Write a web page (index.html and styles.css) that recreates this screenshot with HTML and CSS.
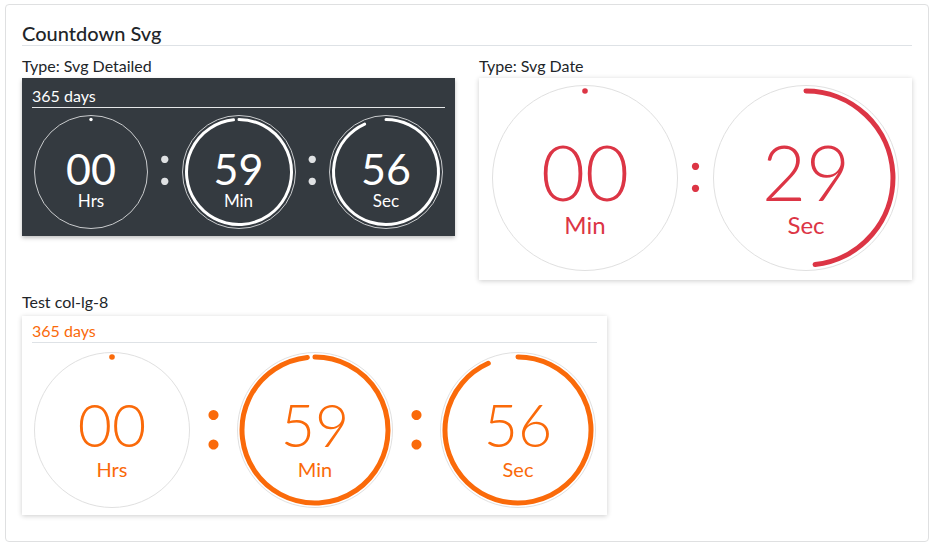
FILE: index.html
```html
<!DOCTYPE html>
<html lang="en">
<head>
<meta charset="utf-8">
<title>Countdown Svg</title>
<link rel="stylesheet" href="styles.css">
</head>
<body>
<div class="card">
  <h5 class="title">Countdown Svg</h5>
  <div class="row">
    <div class="col">
      <div class="label">Type: Svg Detailed</div>
      <div class="panel panel-dark">
        <div class="days">365 days</div>
        <div class="timer">
          <div class="ring ring-sm">
            <svg class="ring-svg" viewBox="0 0 114 114" width="114" height="114">
              <circle cx="57" cy="57" r="56.5" fill="none" stroke="#c9cbcd" stroke-width="1"/>
              <circle cx="57" cy="4.5" r="1.7" fill="#fff"/>
            </svg>
            <div class="txt"><span class="num">00</span><span class="lbl">Hrs</span></div>
          </div>
          <div class="colon">:</div>
          <div class="ring ring-sm">
            <svg class="ring-svg" viewBox="0 0 114 114" width="114" height="114">
              <circle cx="57" cy="57" r="56.5" fill="none" stroke="#c9cbcd" stroke-width="1"/>
              <path d="M57 4.5 A52.5 52.5 0 1 1 51.51 4.79" fill="none" stroke="#fff" stroke-width="3" stroke-linecap="round"/>
            </svg>
            <div class="txt"><span class="num">59</span><span class="lbl">Min</span></div>
          </div>
          <div class="colon">:</div>
          <div class="ring ring-sm">
            <svg class="ring-svg" viewBox="0 0 114 114" width="114" height="114">
              <circle cx="57" cy="57" r="56.5" fill="none" stroke="#c9cbcd" stroke-width="1"/>
              <path d="M57 4.5 A52.5 52.5 0 1 1 35.65 9.04" fill="none" stroke="#fff" stroke-width="3" stroke-linecap="round"/>
            </svg>
            <div class="txt"><span class="num">56</span><span class="lbl">Sec</span></div>
          </div>
        </div>
      </div>
    </div>
    <div class="col">
      <div class="label">Type: Svg Date</div>
      <div class="panel panel-date">
        <div class="timer">
          <div class="ring ring-lg">
            <svg class="ring-svg" viewBox="0 0 186 186" width="186" height="186">
              <circle cx="93" cy="93" r="92.5" fill="none" stroke="#e0e0e0" stroke-width="1"/>
              <circle cx="93" cy="6" r="2.8" fill="#dc3545"/>
            </svg>
            <div class="txt"><span class="num">00</span><span class="lbl">Min</span></div>
          </div>
          <div class="colon">:</div>
          <div class="ring ring-lg">
            <svg class="ring-svg" viewBox="0 0 186 186" width="186" height="186">
              <circle cx="93" cy="93" r="92.5" fill="none" stroke="#e0e0e0" stroke-width="1"/>
              <path d="M93 6 A87 87 0 0 1 102.09 179.52" fill="none" stroke="#dc3545" stroke-width="5" stroke-linecap="round"/>
            </svg>
            <div class="txt"><span class="num">29</span><span class="lbl">Sec</span></div>
          </div>
        </div>
      </div>
    </div>
  </div>
  <div class="label label-test">Test col-lg-8</div>
  <div class="panel panel-orange">
    <div class="days">365 days</div>
    <div class="timer">
      <div class="ring ring-md">
        <svg class="ring-svg" viewBox="0 0 156 156" width="156" height="156">
          <circle cx="78" cy="78" r="77.5" fill="none" stroke="#e0e0e0" stroke-width="1"/>
          <circle cx="78" cy="5" r="2.8" fill="#fa6a0a"/>
        </svg>
        <div class="txt"><span class="num">00</span><span class="lbl">Hrs</span></div>
      </div>
      <div class="colon">:</div>
      <div class="ring ring-md">
        <svg class="ring-svg" viewBox="0 0 156 156" width="156" height="156">
          <circle cx="78" cy="78" r="77.5" fill="none" stroke="#e0e0e0" stroke-width="1"/>
          <path d="M78 5 A73 73 0 1 1 70.37 5.40" fill="none" stroke="#fa6a0a" stroke-width="5" stroke-linecap="round"/>
        </svg>
        <div class="txt"><span class="num">59</span><span class="lbl">Min</span></div>
      </div>
      <div class="colon">:</div>
      <div class="ring ring-md">
        <svg class="ring-svg" viewBox="0 0 156 156" width="156" height="156">
          <circle cx="78" cy="78" r="77.5" fill="none" stroke="#e0e0e0" stroke-width="1"/>
          <path d="M78 5 A73 73 0 1 1 48.31 11.31" fill="none" stroke="#fa6a0a" stroke-width="5" stroke-linecap="round"/>
        </svg>
        <div class="txt"><span class="num">56</span><span class="lbl">Sec</span></div>
      </div>
    </div>
  </div>
</div>
</body>
</html>
```
FILE: styles.css
```css
* { box-sizing: border-box; }
html, body { margin: 0; padding: 0; background: #fff; }
body {
  font-family: Lato, "Open Sans", "Liberation Sans", sans-serif;
  font-size: 16px;
  color: #212529;
}
.card {
  margin: 4px 5px 0 5px;
  width: 924px;
  height: 538px;
  border: 1px solid #dfe0e1;
  border-radius: 4px;
  padding: 16px 16px 0 16px;
}
.title {
  margin: 0;
  font-size: 20px;
  font-weight: 500;
  line-height: 24px;
  border-bottom: 1px solid #dee2e6;
  color: #212529;
}
.row {
  display: flex;
  gap: 24px;
  align-items: flex-start;
}
.col { width: 433px; }
.label {
  line-height: 20px;
  margin: 10px 0 2px 0;
}
.label-test { margin: 12px 0 4px 0; }
.panel { width: 433px; }
.panel-dark {
  background: #343a40;
  color: #fff;
  padding: 7px 10px 7px 10px;
  box-shadow: 0 2px 4px rgba(0,0,0,.25);
}
.panel-date {
  background: #fff;
  color: #dc3545;
  padding: 7px 13px 9px 13px;
  box-shadow: 0 1px 5px rgba(0,0,0,.2);
}
.panel-orange {
  width: 585px;
  background: #fff;
  color: #fa6a0a;
  padding: 4px 10px 7px 10px;
  box-shadow: 0 1px 5px rgba(0,0,0,.2);
}
.days {
  line-height: 21px;
  padding-bottom: 1px;
  border-bottom: 1px solid #dee2e6;
}
.panel-dark .days { border-bottom-color: #e4e6e8; }
.timer {
  display: flex;
  align-items: center;
  padding: 0 2px;
}
.panel-dark .timer { margin-top: 7px; }
.panel-orange .timer { margin-top: 9px; padding: 0 1px 0 2px; }
.panel-date .timer { padding: 0; }
.ring {
  display: grid;
  flex: none;
}
.ring > * { grid-area: 1 / 1; }
.ring-svg { display: block; }
.ring-sm { width: 114px; height: 114px; }
.ring-lg { width: 186px; height: 186px; }
.ring-md { width: 156px; height: 156px; }
.txt {
  display: flex;
  flex-direction: column;
  align-items: center;
  align-self: start;
}
.num, .lbl { display: block; line-height: 1; }
.ring-sm .txt { padding-top: 32px; }
.ring-sm .num { font-size: 43px; }
.ring-sm .lbl { font-size: 17px; margin-top: 2px; }
.ring-lg .txt { padding-top: 49px; }
.ring-lg .num { font-size: 76px; font-weight: 300; }
.ring-lg .lbl { font-size: 24px; margin-top: 3px; }
.ring-md .txt { padding-top: 43px; }
.ring-md .num { font-size: 59px; font-weight: 300; }
.ring-md .lbl { font-size: 20px; margin-top: 5px; }
.colon {
  flex: 1;
  text-align: center;
  line-height: 1;
}
.panel-dark .colon { font-size: 58px; color: #dfe1e3; margin-bottom: 18px; }
.panel-date .colon { font-size: 58px; margin-bottom: 16px; }
.panel-orange .colon { font-size: 80px; margin-bottom: 25px; }
```
